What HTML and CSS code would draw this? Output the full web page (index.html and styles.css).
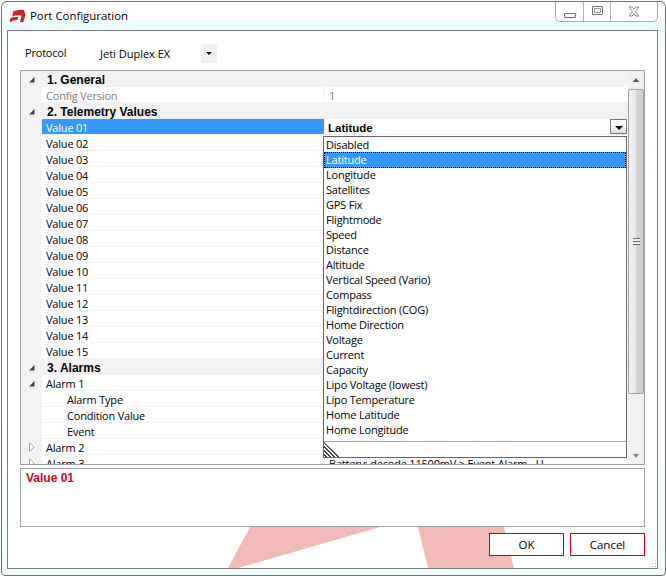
FILE: index.html
```html
<!DOCTYPE html>
<html lang="en">
<head>
<meta charset="utf-8">
<title>Port Configuration</title>
<link rel="stylesheet" href="styles.css">
</head>
<body>
<svg class="defs" width="0" height="0" aria-hidden="true">
  <symbol id="open" viewBox="0 0 7 7"><path d="M6.5 1 L6.5 6.5 L1 6.5 Z" fill="#404040"/></symbol>
  <symbol id="closed" viewBox="0 0 7 10"><path d="M1.5 .5 L6 5 L1.5 9.5 Z" fill="#fff" stroke="#a6a6a6"/></symbol>
</svg>
<div class="window">
  <header class="titlebar">
    <svg class="logo" width="17" height="15" viewBox="0 0 17 15"><path d="M4 2.5 Q10 0 15 1 L16.5 6 L14 13.5 L11 13 L12.5 6.5 Q8 5.5 3.5 7.5 Z M1.5 9 Q5 7.5 9 8 L8.5 11 Q5 10.5 1.5 13 L0.5 12 Z" fill="#d81e26"/></svg>
    <span class="title">Port Configuration</span>
    <div class="caption">
      <div class="cap cap-min"><span class="ico-min"></span></div>
      <div class="cap cap-max"><span class="ico-max"></span></div>
      <div class="cap cap-close">
        <svg width="12" height="11" viewBox="0 0 12 11"><path d="M1 1 H4 L6 3.2 L8 1 H11 L7.6 5.5 L11 10 H8 L6 7.8 L4 10 H1 L4.4 5.5 Z" fill="#fff" stroke="#8a8a8a"/></svg>
      </div>
    </div>
  </header>
  <main class="client">
    <svg class="watermark" width="320" height="41" viewBox="0 0 320 41"><path d="M42 0 H172 L30 41 H20 Z M210 0 H296 L306 41 H220 Z" fill="#f2b9b9"/></svg>
    <div class="protocol">
      <span class="protocol-label">Protocol</span>
      <span class="protocol-value">Jeti Duplex EX</span>
      <span class="protocol-btn"><span class="tri-down"></span></span>
    </div>
    <section class="grid">
      <div class="rows">
        <div class="row cat"><span class="gutter"><svg class="tw" width="7" height="7"><use href="#open"/></svg></span><span class="name">1. General</span></div>
        <div class="row dis"><span class="gutter"></span><span class="name">Config Version</span><span class="val val-green">1</span></div>
        <div class="row cat"><span class="gutter"><svg class="tw" width="7" height="7"><use href="#open"/></svg></span><span class="name">2. Telemetry Values</span></div>
        <div class="row sel"><span class="gutter"></span><span class="name">Value 01</span><span class="val val-bold">Latitude<span class="drop-btn"><span class="tri-down"></span></span></span></div>
        <div class="row"><span class="gutter"></span><span class="name">Value 02</span></div>
        <div class="row"><span class="gutter"></span><span class="name">Value 03</span></div>
        <div class="row"><span class="gutter"></span><span class="name">Value 04</span></div>
        <div class="row"><span class="gutter"></span><span class="name">Value 05</span></div>
        <div class="row"><span class="gutter"></span><span class="name">Value 06</span></div>
        <div class="row"><span class="gutter"></span><span class="name">Value 07</span></div>
        <div class="row"><span class="gutter"></span><span class="name">Value 08</span></div>
        <div class="row"><span class="gutter"></span><span class="name">Value 09</span></div>
        <div class="row"><span class="gutter"></span><span class="name">Value 10</span></div>
        <div class="row"><span class="gutter"></span><span class="name">Value 11</span></div>
        <div class="row"><span class="gutter"></span><span class="name">Value 12</span></div>
        <div class="row"><span class="gutter"></span><span class="name">Value 13</span></div>
        <div class="row"><span class="gutter"></span><span class="name">Value 14</span></div>
        <div class="row"><span class="gutter"></span><span class="name">Value 15</span></div>
        <div class="row cat"><span class="gutter"><svg class="tw" width="7" height="7"><use href="#open"/></svg></span><span class="name">3. Alarms</span></div>
        <div class="row"><span class="gutter"><svg class="tw" width="7" height="7"><use href="#open"/></svg></span><span class="name">Alarm 1</span></div>
        <div class="row child"><span class="gutter"></span><span class="name">Alarm Type</span></div>
        <div class="row child"><span class="gutter"></span><span class="name">Condition Value</span></div>
        <div class="row child"><span class="gutter"></span><span class="name">Event</span></div>
        <div class="row"><span class="gutter"><svg class="tw" width="7" height="10"><use href="#closed"/></svg></span><span class="name">Alarm 2</span></div>
        <div class="row"><span class="gutter"><svg class="tw" width="7" height="10"><use href="#closed"/></svg></span><span class="name">Alarm 3</span><span class="val">Battery: decode 11500mV &gt; Event Alarm - U</span></div>
      </div>
      <div class="scrollbar">
        <span class="arrow arrow-up"><span class="tri-up"></span></span>
        <div class="thumb"><span class="grip"></span></div>
        <span class="arrow arrow-down"><span class="tri-down-grey"></span></span>
      </div>
      <div class="popup">
        <ul class="list">
          <li>Disabled</li>
          <li class="on">Latitude</li>
          <li>Longitude</li>
          <li>Satellites</li>
          <li>GPS Fix</li>
          <li>Flightmode</li>
          <li>Speed</li>
          <li>Distance</li>
          <li>Altitude</li>
          <li>Vertical Speed (Vario)</li>
          <li>Compass</li>
          <li>Flightdirection (COG)</li>
          <li>Home Direction</li>
          <li>Voltage</li>
          <li>Current</li>
          <li>Capacity</li>
          <li>Lipo Voltage (lowest)</li>
          <li>Lipo Temperature</li>
          <li>Home Latitude</li>
          <li>Home Longitude</li>
        </ul>
        <div class="popup-foot"><span class="hatch"></span></div>
      </div>
    </section>
    <section class="desc"><h2 class="desc-title">Value 01</h2></section>
    <footer class="actions">
      <button class="btn">OK</button>
      <button class="btn">Cancel</button>
    </footer>
    <span class="sizegrip"></span>
  </main>
</div>
</body>
</html>
```
FILE: styles.css
```css
html, body { margin: 0; padding: 0; background: #fff; }
body {
  padding: 1px 0 0 1px;
  font-family: "Open Sans", "Liberation Sans", sans-serif;
  font-size: 11px;
  letter-spacing: -0.2px;
  color: #000;
  overflow: hidden;
}
.defs { position: absolute; }
.window {
  box-sizing: border-box;
  width: 665px;
  height: 575px;
  border: 1px solid #6f6f6f;
  border-radius: 6px 6px 4px 4px;
  padding: 0 7px 0 5px;
  background: linear-gradient(180deg, #fff 0, #fff 17px, #e6fbfb 24px, #f4fdfd 30px, #fff 60px, #fff 70%, #eefcfc 100%);
  display: flex;
  flex-direction: column;
}
.titlebar {
  height: 28px;
  flex: none;
  display: flex;
  align-items: flex-start;
  position: relative;
}
.logo { margin: 7px 0 0 2px; }
.title {
  margin: 6px 0 0 4px;
  font-size: 11.4px;
  letter-spacing: 0;
  line-height: 16px;
}
.caption {
  margin-left: auto;
  width: 103px;
  height: 20px;
  box-sizing: border-box;
  border: 1px solid #a8a8a8;
  border-top: 0;
  border-radius: 0 0 5px 5px;
  background: #fff;
  display: flex;
}
.cap { display: flex; align-items: center; justify-content: center; box-sizing: border-box; border-right: 1px solid #b4b4b4; }
.cap-min { width: 28px; }
.cap-max { width: 27px; }
.cap-close { flex: 1; border-right: 0; }
.ico-min { width: 10px; height: 3px; border: 1px solid #6c6c6c; margin-top: 7px; border-radius: 1px; }
.ico-max { width: 9px; height: 7px; border: 1px solid #6c6c6c; box-shadow: inset 0 0 0 1px #fff, inset 0 0 0 2px #999; margin-top: -3px; border-radius: 1px; }
.client {
  position: relative;
  box-sizing: border-box;
  height: 539px;
  border: 1px solid #7d7d7d;
  background: #fff;
  padding: 0 12px;
  display: flex;
  flex-direction: column;
  overflow: hidden;
}
.watermark { position: absolute; left: 200px; bottom: 0; }
.protocol {
  position: relative;
  height: 39px;
  flex: none;
  display: flex;
  align-items: flex-start;
  line-height: 14px;
}
.protocol-label { margin: 15px 0 0 5px; width: 75px; }
.protocol-value { margin-top: 16px; width: 101px; letter-spacing: 0; }
.protocol-btn {
  width: 16px; height: 19px; margin-top: 13px;
  background: #f0f0f0;
  display: flex; align-items: center; justify-content: center;
}
.tri-down { width: 0; height: 0; border: 3px solid transparent; border-top: 3px solid #000; border-bottom: 0; }
.grid {
  position: relative;
  box-sizing: border-box;
  height: 395px;
  flex: none;
  border: 1px solid #a0a0a0;
  background: #fff;
  display: flex;
  overflow: hidden;
}
.rows { width: 607px; flex: none; }
.row {
  box-sizing: border-box;
  height: 16px;
  line-height: 17px;
  display: flex;
  border-bottom: 1px solid #f0f0f0;
  white-space: nowrap;
}
.gutter {
  width: 21px; flex: none;
  background: #f2f2f2;
  display: flex; align-items: center; justify-content: center;
  margin-bottom: -1px;
  padding-right: 1px;
  box-sizing: border-box;
}
.name { width: 282px; flex: none; box-sizing: border-box; padding-left: 4px; }
.val { flex: 1; padding-left: 4px; position: relative; border-left: 1px solid #f0f0f0; }
.row.child .name { padding-left: 25px; }
.row.cat { background: #f2f2f2; font-family: "Liberation Sans", sans-serif; font-size: 12px; font-weight: 700; letter-spacing: 0; line-height: 18px; border-bottom-color: #f2f2f2; }
.row.cat .name { padding-left: 5px; width: auto; }
.row.dis .name { color: #808080; }
.val-green { color: #4c8a5a; }
.row.sel .name { background: #3399ff; color: #fff; }
.val-bold { font-family: "Liberation Sans", sans-serif; font-size: 11.5px; font-weight: 700; letter-spacing: 0; line-height: 18px; padding-left: 3px; }
.drop-btn {
  position: absolute; right: 1px; top: 0;
  box-sizing: border-box;
  width: 17px; height: 15px;
  border: 1px solid #777;
  background: linear-gradient(180deg, #fff 0, #fff 40%, #dcdcdc 100%);
  display: flex; align-items: flex-end; justify-content: center;
  padding-bottom: 3px;
}
.drop-btn .tri-down { border-width: 4px 4px 0; border-top-color: #000; }
.scrollbar {
  flex: 1;
  position: relative;
  background: #f0f0f0;
  display: flex;
  flex-direction: column;
  align-items: flex-start;
}
.arrow { height: 17px; width: 100%; flex: none; display: flex; align-items: center; justify-content: center; }
.arrow-up { height: 18px; }
.arrow-down { margin-top: auto; }
.tri-up { width: 0; height: 0; border: 3px solid transparent; border-top: 0; border-bottom: 4px solid #505050; }
.tri-down-grey { width: 0; height: 0; border: 3px solid transparent; border-bottom: 0; border-top: 4px solid #808080; }
.thumb {
  box-sizing: border-box;
  width: 16px;
  height: 305px;
  border: 1px solid #a0a0a0;
  border-radius: 2px;
  background: linear-gradient(90deg, #f2f2f2 0, #ebebeb 45%, #d2d2d2 55%, #cfcfcf 100%);
  display: flex; align-items: center; justify-content: center;
}
.grip {
  width: 7px; height: 7px;
  background: repeating-linear-gradient(180deg, #6a6a6a 0, #6a6a6a 1px, #eee 1px, #eee 3px);
}
.popup {
  position: absolute;
  left: 302px; top: 65px;
  box-sizing: border-box;
  width: 304px; height: 322px;
  border: 1px solid #646464;
  background: #fff;
  display: flex; flex-direction: column;
}
.list { margin: 0; padding: 0; list-style: none; flex: none; height: 304px; }
.list li { height: 15px; line-height: 16px; padding-left: 2px; white-space: nowrap; }
.list li.on { background: #3399ff; color: #fff; outline: 1px dotted #000; outline-offset: -1px; height: 16px; line-height: 16px; margin-bottom: -1px; }
.popup-foot { flex: 1; border-top: 1px solid #a0a0a0; }
.hatch {
  display: block; width: 16px; height: 15px;
  background: repeating-linear-gradient(45deg, #fff 0, #fff 1.2px, #444 1.2px, #444 2.8px);
  clip-path: polygon(0 0, 100% 100%, 0 100%);
}
.desc {
  box-sizing: border-box;
  height: 59px;
  flex: none;
  margin-top: 3px;
  border: 1px solid #a0a0a0;
  background: #fff;
  position: relative;
}
.desc-title {
  margin: 2px 0 0 5px;
  font-family: "Liberation Sans", sans-serif;
  font-size: 12px;
  letter-spacing: 0;
  line-height: 15px;
  font-weight: 700;
  color: #d0021b;
}
.actions {
  position: relative;
  margin-top: 6px;
  display: flex;
  justify-content: flex-end;
  gap: 6px;
}
.btn {
  box-sizing: border-box;
  width: 75px; height: 23px;
  border: 1px solid #c8000f;
  border-radius: 0;
  background: #fff;
  font-family: "Open Sans", sans-serif;
  font-size: 11.5px;
  padding: 0;
}
.sizegrip {
  position: absolute; right: 0; bottom: 0;
  width: 9px; height: 9px;
  background: radial-gradient(circle, #a8a8a8 0, #a8a8a8 1px, transparent 1px) 0 0 / 3px 3px;
  clip-path: polygon(100% 0, 100% 100%, 0 100%);
}
```
